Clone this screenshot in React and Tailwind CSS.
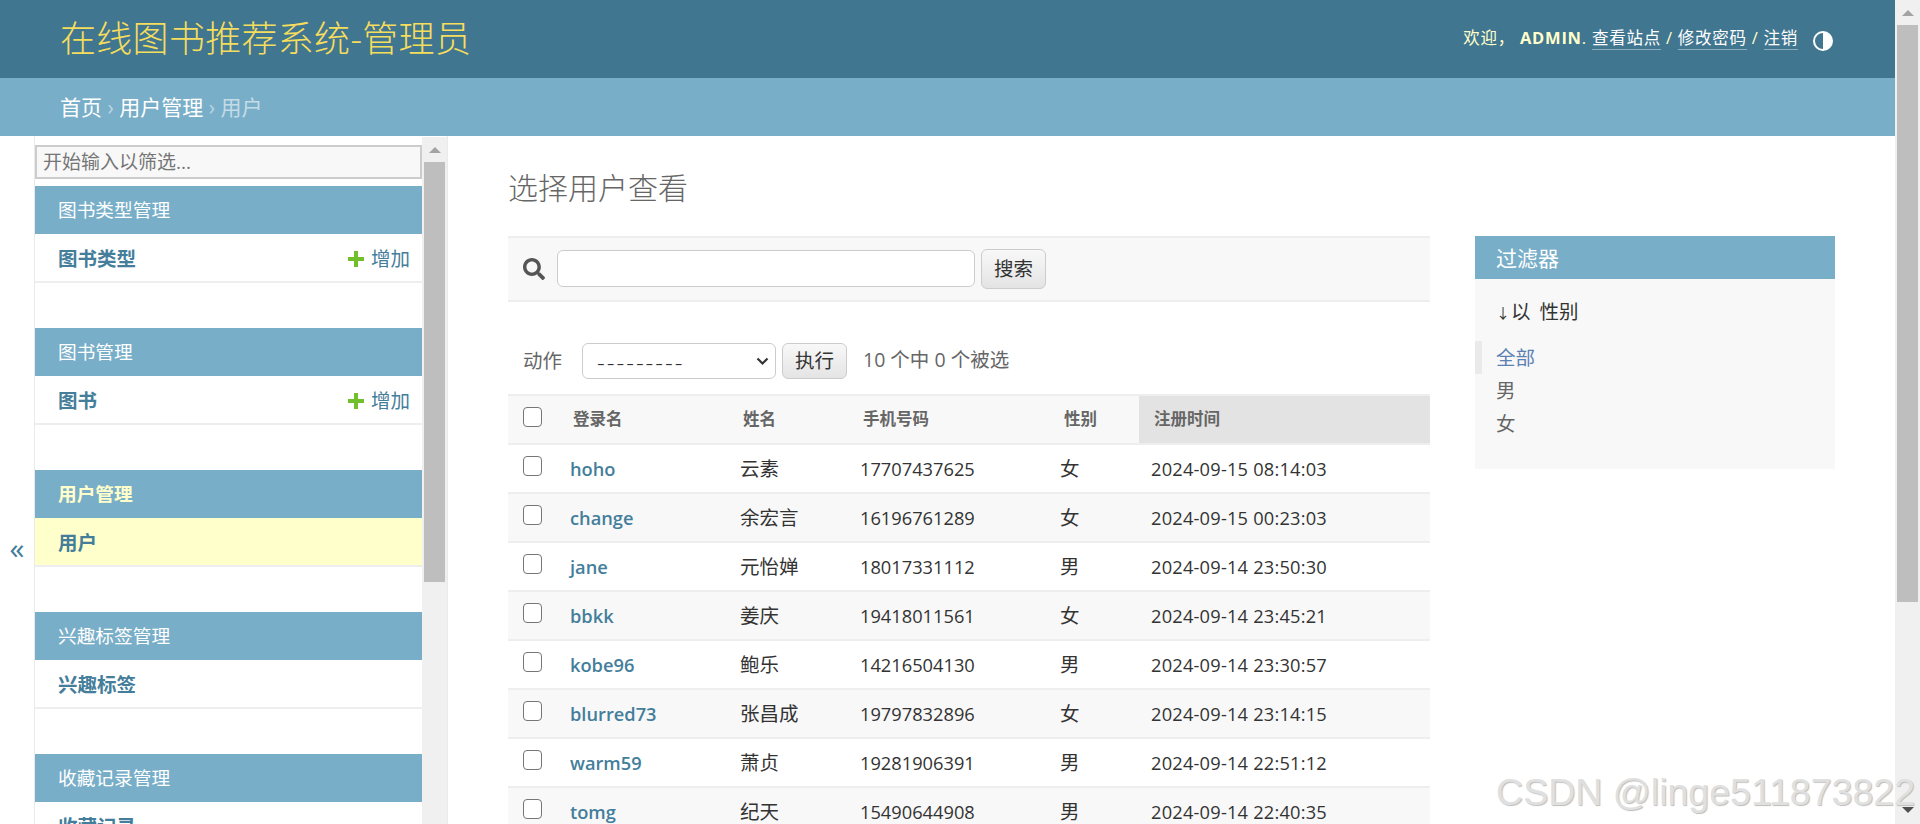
import React from "react";
import { FaSearch } from "react-icons/fa";

const sections = [
  { title: "图书类型管理", item: "图书类型", add: true },
  { title: "图书管理", item: "图书", add: true },
  { title: "用户管理", item: "用户", active: true },
  { title: "兴趣标签管理", item: "兴趣标签" },
  { title: "收藏记录管理", item: "收藏记录" },
];

const users = [
  ["hoho", "云素", "17707437625", "女", "2024-09-15 08:14:03"],
  ["change", "余宏言", "16196761289", "女", "2024-09-15 00:23:03"],
  ["jane", "元怡婵", "18017331112", "男", "2024-09-14 23:50:30"],
  ["bbkk", "姜庆", "19418011561", "女", "2024-09-14 23:45:21"],
  ["kobe96", "鲍乐", "14216504130", "男", "2024-09-14 23:30:57"],
  ["blurred73", "张昌成", "19797832896", "女", "2024-09-14 23:14:15"],
  ["warm59", "萧贞", "19281906391", "男", "2024-09-14 22:51:12"],
  ["tomg", "纪天", "15490644908", "男", "2024-09-14 22:40:35"],
];

function Checkbox() {
  return (
    <input
      type="checkbox"
      className="block appearance-none w-[19px] h-[20px] mb-[5px] bg-white border-[1.5px] border-[#767676] rounded-[4px]"
    />
  );
}

function Scrollbar({ thumbHeight, showBottom, className = "" }) {
  return (
    <div className={`w-[25px] h-full shrink-0 bg-[#f0f0f0] flex flex-col items-center ${className}`}>
      <div className="h-[25px] flex items-center justify-center shrink-0">
        <div className="w-0 h-0 border-x-[6px] border-x-transparent border-b-[6px] border-b-[#a3a3a3]" />
      </div>
      <div className="w-[21px] bg-[#bebebe] shrink-0" style={{ height: thumbHeight }} />
      {showBottom && (
        <div className="mt-auto h-[28px] flex items-center justify-center shrink-0">
          <div className="w-0 h-0 border-x-[6px] border-x-transparent border-t-[6px] border-t-[#505050]" />
        </div>
      )}
    </div>
  );
}

function Sidebar() {
  return (
    <div className="w-[414px] shrink-0 flex border-x border-[#eaeaea] overflow-hidden">
      <div className="w-[387px] shrink-0 pt-[9px]">
        <input
          placeholder="开始输入以筛选..."
          className="block w-full h-[34px] px-[6px] mb-[7px] border-2 border-[#cccccc] bg-[#f8f8f8] text-[19px] placeholder:text-[#757575]"
        />
        {sections.map((s) => (
          <div key={s.title} className="mb-[45px]">
            <div
              className={`h-[48px] pl-[23px] flex items-center bg-[#79aec8] text-[18.7px] ${
                s.active ? "text-[#ffffcc] font-bold" : "text-white"
              }`}
            >
              {s.title}
            </div>
            <div
              className={`h-[49px] pl-[23px] pr-[12px] pt-[3px] flex items-center justify-between border-b-2 border-[#eeeeee] text-[19.5px] text-[#447e9b] ${
                s.active ? "bg-[#ffffcc]" : "bg-white"
              }`}
            >
              <span className="font-bold">{s.item}</span>
              {s.add && (
                <span className="flex items-center gap-[7px]">
                  <svg width="16" height="16" viewBox="0 0 16 16">
                    <path d="M6 0h4v6h6v4h-6v6H6v-6H0V6h6z" fill="#70bf2b" />
                  </svg>
                  增加
                </span>
              )}
            </div>
          </div>
        ))}
      </div>
      <Scrollbar thumbHeight={420} className="mt-px" />
    </div>
  );
}

function Toolbar() {
  return (
    <div className="h-[66px] flex items-center pl-[15px] gap-[6px] bg-[#f8f8f8] border-y-2 border-[#eeeeee]">
      <FaSearch className="text-[#555555] w-[22px] h-[22px] mr-[6px]" />
      <input className="w-[418px] h-[37px] mb-[2px] bg-white border border-[#cccccc] rounded-[6px]" />
      <button className="w-[65px] h-[40px] rounded-[6px] border border-[#cccccc] bg-linear-to-b from-[#f8f8f8] to-[#e4e4e4] text-[19.5px] text-[#333333]">
        搜索
      </button>
    </div>
  );
}

function Actions() {
  return (
    <div className="h-[92px] pt-[41px] pl-[15px] flex items-start text-[19.5px] text-[#666666]">
      <span className="w-[59px] h-[36px] flex items-center">动作</span>
      <div className="relative">
        <select className="block appearance-none w-[194px] h-[36px] pl-[14px] bg-white border border-[#cccccc] rounded-[6px] text-[24px] font-light tracking-[2px] text-[#333333]">
          <option>---------</option>
        </select>
        <svg className="absolute right-[7px] top-[14px]" width="13" height="9" viewBox="0 0 13 9">
          <path d="M1.5 1.5l5 5 5-5" fill="none" stroke="#333333" strokeWidth="2.2" />
        </svg>
      </div>
      <button className="w-[65px] h-[36px] ml-[6px] rounded-[6px] border border-[#cccccc] bg-linear-to-b from-[#f8f8f8] to-[#e4e4e4] text-[19.5px] text-[#333333]">
        执行
      </button>
      <span className="ml-[16px] h-[34px] flex items-center">10 个中 0 个被选</span>
    </div>
  );
}

function ResultTable() {
  const th = "h-[49px] pl-[15px] text-left font-bold text-[16.5px] text-[#666666] border-y-2 border-[#eeeeee]";
  const td = "h-[49px] pl-[12px] border-b-2 border-[#eeeeee] text-[#333333]";
  return (
    <table className="w-[922px] table-fixed">
      <colgroup>
        <col className="w-[50px]" />
        <col className="w-[170px]" />
        <col className="w-[120px]" />
        <col className="w-[200px]" />
        <col className="w-[91px]" />
        <col className="w-[291px]" />
      </colgroup>
      <thead className="bg-[#f8f8f8]">
        <tr>
          <th className={th}>
            <Checkbox />
          </th>
          <th className={th}>登录名</th>
          <th className={th}>姓名</th>
          <th className={`${th} pl-[14px]`}>手机号码</th>
          <th className={`${th} pl-[16px]`}>性别</th>
          <th className={`${th} bg-[#e3e3e3]`}>注册时间</th>
        </tr>
      </thead>
      <tbody>
        {users.map((u, i) => (
          <tr key={u[0]} className={i % 2 === 1 ? "bg-[#f8f8f8]" : "bg-white"}>
            <td className="pl-[15px] border-b-2 border-[#eeeeee]">
              <Checkbox />
            </td>
            <td className={`${td} text-[18.25px] font-semibold`}>
              <span className="text-[#447e9b]">{u[0]}</span>
            </td>
            <td className={`${td} text-[19.5px]`}>{u[1]}</td>
            <td className={`${td} text-[18.25px]`}>{u[2]}</td>
            <td className={`${td} text-[19.5px]`}>{u[3]}</td>
            <td className={`${td} text-[18.25px] tracking-[0.2px]`}>{u[4]}</td>
          </tr>
        ))}
      </tbody>
    </table>
  );
}

function FilterPanel() {
  return (
    <div className="w-[360px] ml-[45px] shrink-0 self-start bg-[#f8f8f8] h-[233px]">
      <div className="h-[43px] pl-[21px] pt-[2px] flex items-center bg-[#79aec8] text-white text-[21px]">过滤器</div>
      <div className="h-[62px] pl-[21px] pt-[4px] flex items-center text-[19.5px] text-[#333333]">
        <span className="w-[15px] text-[14px]">↓</span>
        <span className="[word-spacing:4px]">以 性别</span>
      </div>
      <ul className="text-[19.5px] leading-[33px]">
        <li className="pl-[14px] border-l-[7px] border-[#eaeaea] text-[#5b80b2]">全部</li>
        <li className="pl-[21px] text-[#666666]">男</li>
        <li className="pl-[21px] text-[#666666]">女</li>
      </ul>
    </div>
  );
}

export default function App() {
  return (
    <div className="relative h-screen flex overflow-hidden bg-white [font-family:'Open_Sans','Noto_Sans_CJK_SC',sans-serif]">
      <div className="flex-1 min-w-0 flex flex-col">
        <header className="h-[78px] shrink-0 pl-[60px] pr-[62px] flex items-center justify-between bg-[#417690]">
          <div className="text-[36px] tracking-[0.3px] font-light text-[#f5dd5d]">在线图书推荐系统-管理员</div>
          <div className="flex items-center text-[16.5px] tracking-[0.75px] text-[#ffffcc]">
            <span className="mb-[2px]">欢迎，</span>
            <strong className="ml-[5px] mb-[2px] font-bold">ADMIN</strong>
            <span className="mr-[5px] mb-[2px]">.</span>
            <span className="mb-[2px] text-white border-b border-white/40 leading-[22px]">查看站点</span>
            <span className="mx-[5px] mb-[2px]">/</span>
            <span className="mb-[2px] text-white border-b border-white/40 leading-[22px]">修改密码</span>
            <span className="mx-[5px] mb-[2px]">/</span>
            <span className="mb-[2px] text-white border-b border-white/40 leading-[22px]">注销</span>
            <svg className="ml-[15px] mt-[3px]" width="20" height="20" viewBox="0 0 20 20">
              <circle cx="10" cy="10" r="9" fill="none" stroke="white" strokeWidth="2" />
              <path d="M10 1a9 9 0 0 1 0 18z" fill="white" />
            </svg>
          </div>
        </header>
        <div className="h-[58px] shrink-0 pl-[60px] pt-[2px] flex items-center bg-[#79aec8] text-[21px] text-white whitespace-pre">
          <span>首页</span>
          <span className="text-white/50"> › </span>
          <span>用户管理</span>
          <span className="text-white/50"> › </span>
          <span className="text-[#c4dce8]">用户</span>
        </div>
        <div className="flex-1 min-h-0 flex">
          <div className="w-[34px] shrink-0 pt-[394px] text-center text-[#447e9b] text-[30px] leading-[36px]">«</div>
          <Sidebar />
          <main className="flex-1 min-w-0 pl-[60px] overflow-hidden">
            <h1 className="pt-[34px] mb-[30px] text-[30px] leading-[36px] font-light text-[#666666]">选择用户查看</h1>
            <div className="flex">
              <div className="w-[922px] shrink-0">
                <Toolbar />
                <Actions />
                <ResultTable />
              </div>
              <FilterPanel />
            </div>
          </main>
        </div>
      </div>
      <Scrollbar thumbHeight={577} showBottom />
      <div className="absolute right-[5px] top-[764px] text-[37.5px] text-[#e0e0e0] [font-family:'Liberation_Sans',sans-serif] [text-shadow:1px_1px_1px_#bdbdbd]">
        CSDN @linge511873822
      </div>
    </div>
  );
}
